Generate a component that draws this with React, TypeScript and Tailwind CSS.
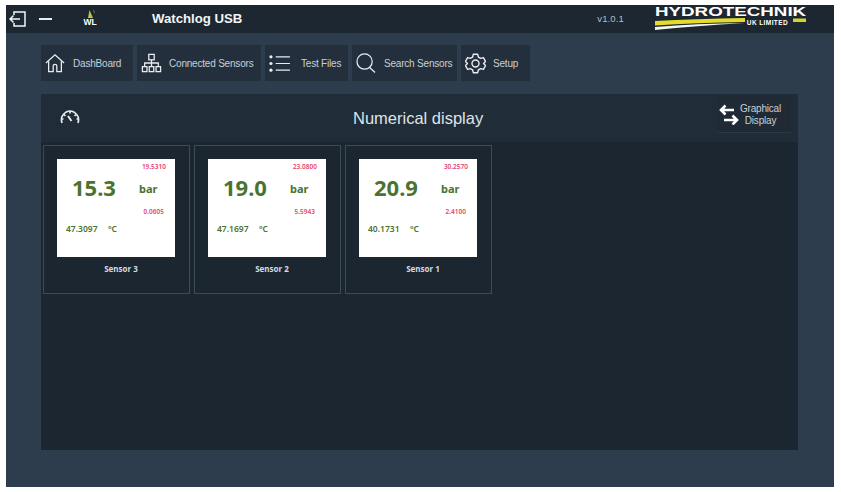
import { ReactNode } from 'react'

const sensors = [
  { name: 'Sensor 3', value: '15.3', max: '19.5310', min: '0.0605', temp: '47.3097' },
  { name: 'Sensor 2', value: '19.0', max: '23.0800', min: '5.5943', temp: '47.1697' },
  { name: 'Sensor 1', value: '20.9', max: '30.2570', min: '2.4100', temp: '40.1731' },
]

function HomeIcon() {
  return (
    <svg width="20" height="20" viewBox="0 0 22 22" fill="none" stroke="#e8edf0" strokeWidth="1.4">
      <path d="M1 11 L11 2 L21 11" />
      <path d="M4 9 V20.5 H9 V14 Q9 12.5 11 12.5 Q13 12.5 13 14 V20.5 H18 V9" />
    </svg>
  )
}

function NetworkIcon() {
  return (
    <svg width="21" height="20" viewBox="0 0 22 22" fill="none" stroke="#e8edf0" strokeWidth="1.4">
      <rect x="8" y="1.5" width="6" height="6" />
      <path d="M11 7.5 V11 M3.5 15 V11 H18.5 V15 M11 11 V15" />
      <rect x="1" y="15" width="5" height="5.5" />
      <rect x="8.5" y="15" width="5" height="5.5" />
      <rect x="16" y="15" width="5" height="5.5" />
    </svg>
  )
}

function ListIcon() {
  return (
    <svg width="21" height="19" viewBox="0 0 22 20" fill="none" stroke="#e8edf0" strokeWidth="1.3">
      <circle cx="2" cy="3" r="1.7" fill="#e8edf0" stroke="none" />
      <circle cx="2" cy="10" r="1.7" fill="#e8edf0" stroke="none" />
      <circle cx="2" cy="17" r="1.7" fill="#e8edf0" stroke="none" />
      <path d="M7 3 H22 M7 10 H22 M7 17 H22" />
    </svg>
  )
}

function SearchIcon() {
  return (
    <svg width="20" height="20" viewBox="0 0 21 21" fill="none" stroke="#e8edf0" strokeWidth="1.3">
      <circle cx="9" cy="9" r="8" />
      <path d="M14 15 L20 20.5" />
    </svg>
  )
}

function GearIcon() {
  return (
    <svg width="21" height="21" viewBox="0 0 24 24" fill="none" stroke="#e8edf0" strokeWidth="1.6" strokeLinejoin="round">
      <path d="M9.5 1.5 H14.5 L15.3 4.6 L18 6.1 L21 5.2 L23.5 9.6 L21.2 11.9 V12.1 L23.5 14.4 L21 18.8 L18 17.9 L15.3 19.4 L14.5 22.5 H9.5 L8.7 19.4 L6 17.9 L3 18.8 L0.5 14.4 L2.8 12.1 V11.9 L0.5 9.6 L3 5.2 L6 6.1 L8.7 4.6 Z" />
      <circle cx="12" cy="12" r="4" />
    </svg>
  )
}

function NavTile({ icon, label, width, gap }: { icon: ReactNode; label: string; width: string; gap: string }) {
  return (
    <div className={`flex h-[36px] items-center bg-[#232f3c] pl-[4px] ${width} ${gap}`}>
      {icon}
      <span className="whitespace-nowrap text-[10px] tracking-[-0.2px] text-[#c9d0d6]">{label}</span>
    </div>
  )
}

function SensorCard({ sensor }: { sensor: (typeof sensors)[number] }) {
  return (
    <div className="flex h-[149px] w-[147px] flex-col border border-[#3d4b57] pl-[13px] pt-[13px]">
      <div className="flex h-[98px] w-[118px] flex-col bg-white font-['Noto_Sans',sans-serif] font-semibold text-[#4b7330]">
        <div className="mt-[3px] pr-[9px] text-right text-[6.5px] leading-[10px] text-[#e8426e]">{sensor.max}</div>
        <div className="mt-[1px] flex h-[28px] items-center pl-[15px]">
          <span className="w-[67px] text-[22px] font-bold leading-[28px]">{sensor.value}</span>
          <span className="mt-[4px] text-[11px] font-bold">bar</span>
        </div>
        <div className="mt-[6px] pr-[11px] text-right text-[6.5px] leading-[10px] text-[#e8426e]">{sensor.min}</div>
        <div className="mt-[5px] flex items-center pl-[9px] text-[8.5px] leading-[14px]">
          <span className="w-[42px]">{sensor.temp}</span>
          <span>°C</span>
        </div>
      </div>
      <span className="ml-[5px] mt-[6px] w-[118px] text-center font-['Noto_Sans',sans-serif] text-[8px] font-bold text-[#d6dbe0]">
        {sensor.name}
      </span>
    </div>
  )
}

export default function App() {
  return (
    <div className="h-[492px] w-[841px] bg-white pb-[5px] pl-[6px] pr-[7px] pt-[5px] font-['Liberation_Sans',sans-serif]">
      <div className="flex h-full flex-col bg-[#2e3d4e]">
        {/* title bar */}
        <div className="flex h-[28px] shrink-0 items-center bg-[#1d2731] text-white">
          <svg className="ml-[3px]" width="18" height="18" viewBox="0 0 18 18" fill="none" stroke="#f2f4f5" strokeWidth="1.5">
            <path d="M5 5 V2 H16 V16 H5 V13" />
            <path d="M1 9 H11 M4.5 5.5 L1 9 L4.5 12.5" />
          </svg>
          <div className="ml-[12px] h-[1.5px] w-[13px] bg-[#e8edf0]" />
          <div className="relative mb-[6px] ml-[31px] flex h-[22px] w-[14px] flex-col items-center justify-end">
            <svg className="absolute left-[2px] top-[3px]" width="11" height="11" viewBox="0 0 11 11" fill="none">
              <path d="M3 10 L4.5 2 L8 10 Z" fill="#c6c23a" />
              <path d="M8 2 Q9.5 3 9.5 5" stroke="#8f9a5c" strokeWidth="0.7" />
            </svg>
            <span className="relative text-[8.5px] font-bold leading-[9px] text-white">WL</span>
          </div>
          <span className="ml-[55px] text-[13.2px] font-bold text-[#f2f4f5]">Watchlog USB</span>
          <span className="ml-[355px] text-[9.5px] tracking-[0.1px] text-[#b4bcc3]">v1.0.1</span>
          <div className="relative ml-[31px] h-[28px] w-[152px] self-start">
            <span className="absolute left-0 top-0 origin-left scale-x-[1.39] text-[13.5px] font-bold leading-[14px] text-white">HYDROTECHNIK</span>
            <svg className="absolute left-0 top-[11px]" width="152" height="15" viewBox="0 0 152 15">
              <path d="M0 5 Q40 3 90 2 L90 6 Q40 6.500 0 9.500 Z" fill="#e5dc2a" />
              <path d="M0 11 Q40 7.500 90 7 Q40 10 0 14 Z" fill="#f5f5f5" />
              <path d="M138 2.500 H151 V6 H138 Z" fill="#d9d22c" />
            </svg>
            <span className="absolute left-[92px] top-[14px] whitespace-nowrap text-[6.5px] font-bold leading-[7px] tracking-[0.4px] text-white">UK LIMITED</span>
          </div>
        </div>

        {/* nav */}
        <div className="ml-[35px] mt-[12px] flex gap-[4px]">
          <NavTile icon={<HomeIcon />} label="DashBoard" width="w-[92px]" gap="gap-[8px]" />
          <NavTile icon={<NetworkIcon />} label="Connected Sensors" width="w-[124px]" gap="gap-[7px]" />
          <NavTile icon={<ListIcon />} label="Test Files" width="w-[83px]" gap="gap-[11px]" />
          <NavTile icon={<SearchIcon />} label="Search Sensors" width="w-[105px]" gap="gap-[8px]" />
          <NavTile icon={<GearIcon />} label="Setup" width="w-[69px]" gap="gap-[7px]" />
        </div>

        {/* numerical display panel */}
        <div className="ml-[35px] mt-[13px] flex h-[356px] w-[757px] flex-col bg-[#1c2630]">
          <div className="flex h-[48px] shrink-0 items-center bg-[#202c38]">
            <svg className="mb-[3px] ml-[19px]" width="20" height="14" viewBox="0 0 20 14" fill="none" stroke="#e8edf0" strokeWidth="1.700">
              <path d="M2 13 Q0.5 8 3 5 Q6 1 10 1 Q14 1 17 5 Q19.500 8 18 13" />
              <path d="M10 1 V3.500 M4 4.500 L5.500 6 M16 4.500 L14.500 6 M1.500 9 H3.500 M18.500 9 H16.500" />
              <path d="M8 6 L11.500 11" strokeWidth="2" />
            </svg>
            <span className="ml-[273px] w-[130px] whitespace-nowrap text-center text-[16.5px] text-[#dfe4e8]">Numerical display</span>
            <div className="ml-[235px] mt-[-6px] flex h-[36px] w-[73px] items-center gap-[1px] border-b border-[#2e3b47] bg-[#1f2a35] pl-[1px]">
              <svg className="shrink-0" width="20" height="21" viewBox="0 0 20 21" fill="none" stroke="#ffffff" strokeWidth="2.600">
                <path d="M2 6 H15 M6.500 1.500 L2 6 L6.500 10.500" />
                <path d="M5 16 H18 M13.500 11.500 L18 16 L13.500 20.500" />
              </svg>
              <span className="whitespace-nowrap text-center text-[10px] leading-[12px] tracking-[-0.2px] text-[#c9d0d6]">
                Graphical
                <br />
                Display
              </span>
            </div>
          </div>
          <div className="ml-[2px] mt-[3px] flex gap-[4px]">
            {sensors.map((sensor) => (
              <SensorCard key={sensor.name} sensor={sensor} />
            ))}
          </div>
        </div>
      </div>
    </div>
  )
}
